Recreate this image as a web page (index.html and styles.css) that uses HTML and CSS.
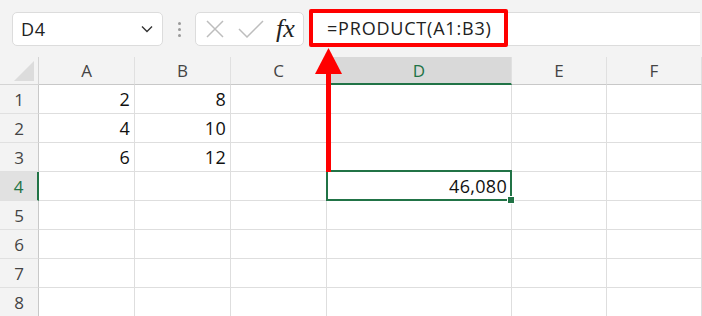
FILE: index.html
```html
<!DOCTYPE html>
<html lang="en">
<head>
    <meta charset="UTF-8">
    <title>PRODUCT example</title>
    <link rel="stylesheet" href="styles.css">
</head>
<body>
    <div class="app">
        <div class="toolbar">
            <div class="name-box">
                <span>D4</span>
                <svg class="chevron" width="12" height="8" viewBox="0 0 12 8">
                    <path d="M1 1.5 L6 6.5 L11 1.5" fill="none" stroke="#333" stroke-width="1.4"/>
                </svg>
            </div>
            <div class="grip">
                <span></span><span></span><span></span>
            </div>
            <div class="fx-box">
                <svg width="20" height="20" viewBox="0 0 20 20">
                    <path d="M2 2 L18 18 M18 2 L2 18" stroke="#bdbdbd" stroke-width="1.5" fill="none"/>
                </svg>
                <svg width="28" height="20" viewBox="0 0 28 20">
                    <path d="M2 10 L10 18 L26 2" stroke="#bdbdbd" stroke-width="1.5" fill="none"/>
                </svg>
                <span class="fx">fx</span>
            </div>
            <div class="formula-bar">
                <div class="formula-highlight">=PRODUCT(A1:B3)</div>
            </div>
        </div>

        <div class="sheet">
            <div class="corner"><div class="corner-tri"></div></div>
            <div class="col-head">A</div>
            <div class="col-head">B</div>
            <div class="col-head">C</div>
            <div class="col-head active">D</div>
            <div class="col-head">E</div>
            <div class="col-head">F</div>

            <div class="row-head">1</div>
            <div class="cell num">2</div><div class="cell num">8</div><div class="cell"></div><div class="cell"></div><div class="cell"></div><div class="cell"></div>

            <div class="row-head">2</div>
            <div class="cell num">4</div><div class="cell num">10</div><div class="cell"></div><div class="cell"></div><div class="cell"></div><div class="cell"></div>

            <div class="row-head">3</div>
            <div class="cell num">6</div><div class="cell num">12</div><div class="cell"></div><div class="cell"></div><div class="cell"></div><div class="cell"></div>

            <div class="row-head active">4</div>
            <div class="cell"></div><div class="cell"></div><div class="cell"></div><div class="cell num selected">46,080</div><div class="cell"></div><div class="cell"></div>

            <div class="row-head">5</div>
            <div class="cell"></div><div class="cell"></div><div class="cell"></div><div class="cell"></div><div class="cell"></div><div class="cell"></div>

            <div class="row-head">6</div>
            <div class="cell"></div><div class="cell"></div><div class="cell"></div><div class="cell"></div><div class="cell"></div><div class="cell"></div>

            <div class="row-head">7</div>
            <div class="cell"></div><div class="cell"></div><div class="cell"></div><div class="cell"></div><div class="cell"></div><div class="cell"></div>

            <div class="row-head">8</div>
            <div class="cell"></div><div class="cell"></div><div class="cell"></div><div class="cell"></div><div class="cell"></div><div class="cell"></div>
        </div>

        <!-- annotation arrow from the result cell up to the formula -->
        <svg class="arrow" width="702" height="316" viewBox="0 0 702 316">
            <rect x="326" y="70" width="5" height="102" fill="#ff0000"/>
            <polygon points="315,74 342,74 328.5,48" fill="#ff0000"/>
        </svg>
    </div>
</body>
</html>
```

FILE: styles.css
```css
* {
    margin: 0;
    padding: 0;
    box-sizing: border-box;
}

body {
    font-family: 'Open Sans', 'Noto Sans', sans-serif;
    background: #f3f3f3;
    width: 702px;
    height: 316px;
    overflow: hidden;
}

.app {
    position: relative;
    width: 702px;
    height: 316px;
}

.toolbar {
    display: flex;
    align-items: center;
    height: 57px;
    padding: 12px 2px 11px 12px;
}

.name-box {
    display: flex;
    align-items: center;
    justify-content: space-between;
    width: 151px;
    height: 34px;
    padding: 0 9px 0 8px;
    background: white;
    border: 1px solid #dcdcdc;
    border-radius: 5px;
    font-size: 18px;
    letter-spacing: 0.6px;
    color: #222;
}

.grip {
    display: flex;
    flex-direction: column;
    gap: 3px;
    width: 32px;
    align-items: center;
}

.grip span {
    width: 3px;
    height: 3px;
    background: #9a9a9a;
    border-radius: 50%;
}

.fx-box {
    display: flex;
    align-items: center;
    gap: 12px;
    width: 109px;
    height: 34px;
    padding: 0 6px 0 9px;
    background: white;
    border: 1px solid #dcdcdc;
    border-radius: 5px;
}

.fx {
    font-family: 'Liberation Serif', serif;
    font-style: italic;
    font-size: 26px;
    line-height: 1;
    color: #222;
    margin-left: -1px;
}

.formula-bar {
    flex: 1;
    display: flex;
    align-items: center;
    height: 34px;
    margin-left: 6px;
    background: white;
    border-top: 1px solid #dcdcdc;
    border-bottom: 1px solid #dcdcdc;
}

.formula-highlight {
    display: flex;
    align-items: center;
    width: 199px;
    height: 38px;
    margin-left: -1px;
    margin-top: -2px;
    padding-left: 14px;
    border: 4px solid #ff0000;
    border-radius: 2px;
    font-size: 18px;
    letter-spacing: 0.8px;
    color: #222;
}

.sheet {
    display: grid;
    grid-template-columns: 39px 96px 96px 96px 185px 95px 95px;
    grid-template-rows: 28px repeat(8, 29px);
    background: white;
}

.corner {
    background: #f3f3f3;
    border-right: 1px solid #d4d4d4;
    border-bottom: 1px solid #d4d4d4;
    position: relative;
}

.corner-tri {
    position: absolute;
    right: 4px;
    bottom: 3px;
    width: 0;
    height: 0;
    border-left: 20px solid transparent;
    border-bottom: 20px solid #dcdcdc;
}

.col-head {
    display: flex;
    align-items: center;
    justify-content: center;
    background: #f3f3f3;
    border-right: 1px solid #e0e0e0;
    border-bottom: 1px solid #c8c8c8;
    font-size: 17px;
    color: #444;
}

.col-head.active {
    background: #d9d9d9;
    color: #217346;
    border-bottom: 2px solid #217346;
}

.row-head {
    display: flex;
    align-items: center;
    justify-content: center;
    background: #f3f3f3;
    border-right: 1px solid #c8c8c8;
    border-bottom: 1px solid #e0e0e0;
    font-size: 17px;
    color: #444;
}

.row-head.active {
    background: #e1e1e1;
    color: #217346;
    border-right: 2px solid #217346;
}

.cell {
    display: flex;
    align-items: center;
    justify-content: flex-end;
    padding-right: 4px;
    border-right: 1px solid #dedede;
    border-bottom: 1px solid #dedede;
    font-size: 18px;
    letter-spacing: 0.3px;
    color: #111;
}

.cell.selected {
    position: relative;
}

.cell.selected::before {
    content: '';
    position: absolute;
    top: -2px;
    left: -1px;
    right: -1px;
    bottom: -1px;
    border: 2px solid #217346;
}

.cell.selected::after {
    content: '';
    position: absolute;
    right: -4px;
    bottom: -4px;
    width: 6px;
    height: 6px;
    background: #217346;
    border: 1px solid white;
}

.arrow {
    position: absolute;
    top: 0;
    left: 0;
    pointer-events: none;
}
```
